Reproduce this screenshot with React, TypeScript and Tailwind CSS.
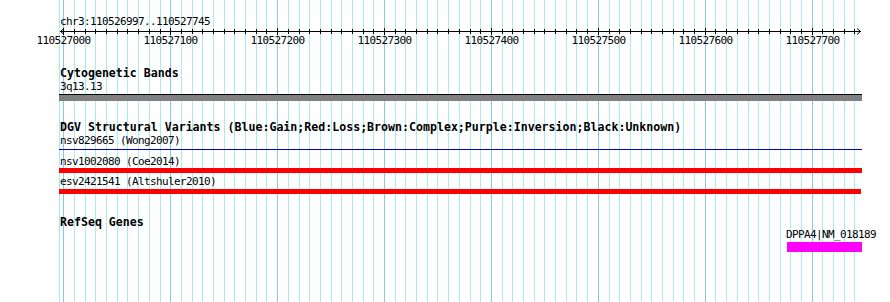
import React from "react";

const START = 110527000;
const PX_PER_BP = 1.0691;
const X0 = 63.3;

const bpToX = (bp: number) => Math.round(X0 + (bp - START) * PX_PER_BP);

const minorLines = Array.from({ length: 75 }, (_, i) => ({
  x: bpToX(START + i * 10),
  major: i % 10 === 0,
}));

const majorLabels = Array.from({ length: 8 }, (_, i) => START + i * 100);

function GridBackground() {
  return (
    <svg
      className="absolute inset-0"
      width={890}
      height={302}
      shapeRendering="crispEdges"
    >
      <rect x={59} y={0} width={1} height={302} fill="#a8ecf2" />
      {minorLines.map((l) => (
        <rect
          key={l.x}
          x={l.x}
          y={0}
          width={1}
          height={302}
          fill={l.major ? "#86c8ea" : "#a8ecf2"}
        />
      ))}
    </svg>
  );
}

function Ruler() {
  return (
    <div className="relative h-[20px] w-full">
      <svg
        className="absolute left-0 top-0"
        width={890}
        height={20}
        shapeRendering="crispEdges"
      >
        <rect x={60} y={3} width={801} height={1} fill="#000" />
        {minorLines.map((l) => (
          <rect
            key={l.x}
            x={l.x}
            y={l.major ? 0 : 1}
            width={1}
            height={l.major ? 7 : 5}
            fill="#000"
          />
        ))}
        <g stroke="#000" strokeWidth={1} fill="none" shapeRendering="auto">
          <path d="M64 0.5 L60.5 3.5 L64 6.5" />
          <path d="M857 0.5 L860.5 3.5 L857 6.5" />
        </g>
      </svg>
      {majorLabels.map((bp) => (
        <span
          key={bp}
          className="absolute top-[6px] h-[13px] w-[55px] text-center text-[11px] leading-[13px] tracking-[-0.62px] text-black"
          style={{ left: bpToX(bp) - 27 }}
        >
          {bp}
        </span>
      ))}
    </div>
  );
}

const label =
  "h-[13px] pl-[60px] text-[11px] leading-[13px] tracking-[-0.62px] text-black whitespace-nowrap";
const title =
  "h-[14px] pl-[60px] text-[11.6px] font-bold leading-[14px] text-black whitespace-nowrap";

export default function App() {
  return (
    <div
      className="relative h-[302px] w-[890px] overflow-hidden bg-white"
      style={{ fontFamily: '"DejaVu Sans Mono", "Liberation Mono", monospace' }}
    >
      <GridBackground />
      <div className="relative flex flex-col">
        <div className="h-[15px]" />
        <div className={label}>chr3:110526997..110527745</div>
        <Ruler />

        <div className="h-[18px]" />
        <div className={title}>Cytogenetic Bands</div>
        <div className={label}>3q13.13</div>
        <div className="ml-[59px] mt-[1px] h-[7px] w-[803px] border-t border-black bg-[#808080]" />

        <div className="h-[19px]" />
        <div className={title}>
          DGV Structural Variants (Blue:Gain;Red:Loss;Brown:Complex;Purple:Inversion;Black:Unknown)
        </div>
        <div className={label}>nsv829665 (Wong2007)</div>
        <div className="ml-[59px] mt-[2px] h-[1px] w-[803px] bg-[#0000c8]" />
        <div className="h-[5px]" />
        <div className={label}>nsv1002080 (Coe2014)</div>
        <div className="ml-[59px] h-[5px] w-[803px] bg-[#ff0000]" />
        <div className="h-[2px]" />
        <div className={label}>esv2421541 (Altshuler2010)</div>
        <div className="ml-[59px] mt-[1px] h-[5px] w-[802px] bg-[#ff0000]" />

        <div className="h-[22px]" />
        <div className="h-[13px] pl-[60px] text-[11.6px] font-bold leading-[13px] text-black whitespace-nowrap">
          RefSeq Genes
        </div>
        <div className="relative z-10 h-[12px] pl-[786px] text-[11px] leading-[12px] tracking-[-0.62px] text-black whitespace-nowrap">
          DPPA4|NM_018189
        </div>
        <div className="ml-[787px] mt-[1px] h-[10px] w-[75px] bg-[#ff00ff]" />
      </div>
    </div>
  );
}
